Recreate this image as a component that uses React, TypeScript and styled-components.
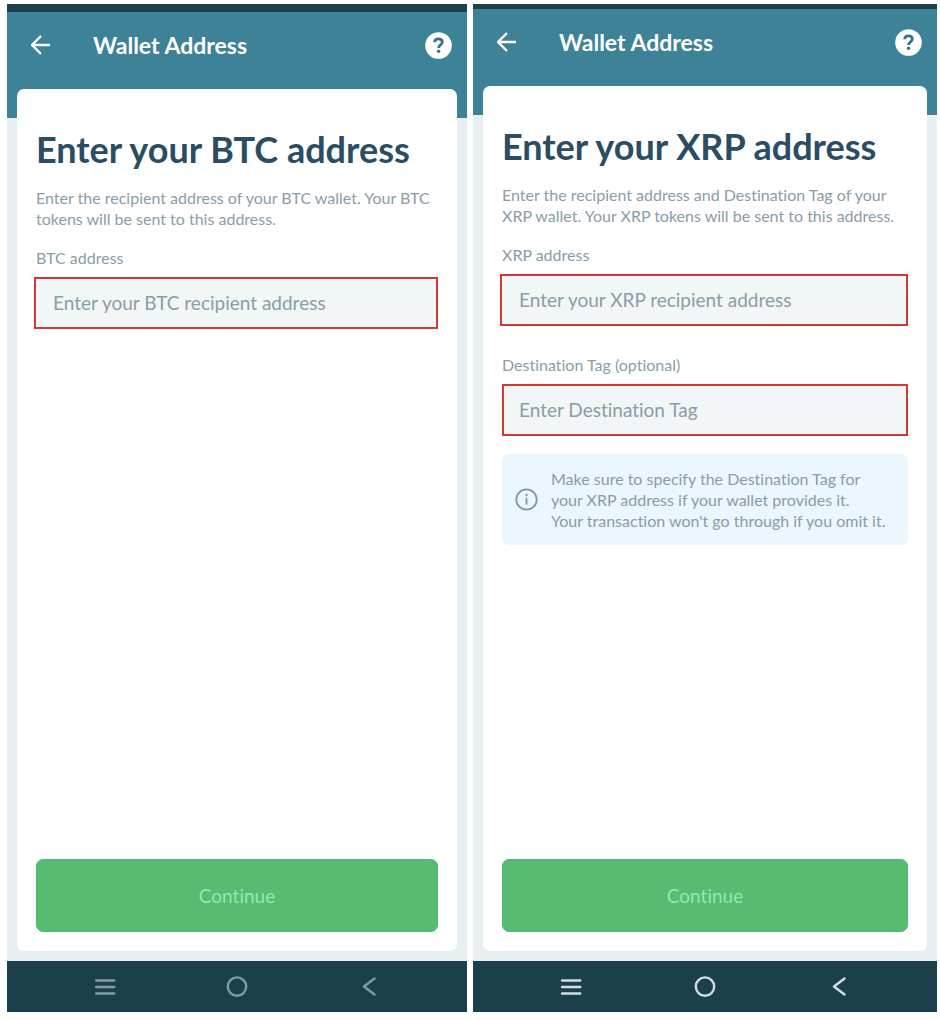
import React, { useId } from "react";
import styled, { createGlobalStyle } from "styled-components";

const GlobalStyle = createGlobalStyle`
  *, *::before, *::after { box-sizing: border-box; }
  body {
    margin: 0;
    background: #fefefe;
    font-family: Lato, "Open Sans", sans-serif;
    font-variant-ligatures: none;
    color: #8a9da8;
  }
`;

const Page = styled.main`
  display: grid;
  grid-template-columns: 460fr 464fr;
  gap: 6px;
  min-height: 100vh;
  padding: 4px 3px 8px 7px;
`;

const Phone = styled.section<{ $status: number }>`
  display: flex;
  flex-direction: column;
  border-top: ${(p) => p.$status}px solid #1d414c;
  background: #e7eff2;
  min-width: 0;
`;

const Header = styled.header`
  display: flex;
  align-items: flex-start;
  height: 106px;
  padding: 20px 15px 0 24px;
  background: #3d8297;
  color: #fff;
`;

const IconButton = styled.button`
  display: flex;
  padding: 0;
  border: 0;
  background: none;
  color: inherit;
  cursor: pointer;
`;

const BackButton = styled(IconButton)`
  padding: 3px 0;
`;

const HeaderTitle = styled.span`
  flex: 1;
  margin-left: 42px;
  font-size: 23px;
  line-height: 27px;
  font-weight: 700;
`;

const Card = styled.form`
  display: flex;
  flex: 1;
  flex-direction: column;
  margin: -29px 10px 10px;
  padding: 38px 19px 19px;
  border-radius: 7px;
  background: #fff;
`;

const Title = styled.h1`
  margin: 0;
  color: #2b4d63;
  font-size: 36px;
  line-height: 44px;
  font-weight: 700;
  white-space: nowrap;
`;

const Intro = styled.p`
  margin: 16px 0 0;
  font-size: 16px;
  line-height: 21px;
  white-space: pre-line;
`;

const Field = styled.div<{ $gap: number }>`
  display: flex;
  flex-direction: column;
  margin-top: ${(p) => p.$gap}px;
`;

const Label = styled.label`
  font-size: 16px;
  line-height: 20px;
`;

const TextInput = styled.input<{ $outset: number }>`
  height: 52px;
  margin: 9px 0 0 ${(p) => -p.$outset}px;
  padding: 0 ${(p) => 15 + p.$outset}px 2px;
  border: 2px solid #cf3a35;
  border-radius: 0;
  background: #f3f6f7;
  color: #2b4d63;
  font: inherit;
  font-size: 19px;
  outline: none;
  &::placeholder {
    color: #8a9da8;
    opacity: 1;
  }
`;

const Note = styled.aside`
  display: flex;
  align-items: center;
  gap: 13px;
  margin-top: 18px;
  padding: 14px 13px;
  border-radius: 7px;
  background: #ebf6fd;
  svg { flex: none; }
`;

const NoteText = styled.p`
  margin: 0;
  font-size: 16px;
  line-height: 21px;
  white-space: pre-line;
`;

const Continue = styled.button`
  height: 73px;
  margin-top: auto;
  border: 1px solid #4db781;
  border-radius: 7px;
  background: #57bc71;
  color: #90e8b7;
  font: inherit;
  font-size: 19px;
  cursor: pointer;
`;

const NavBar = styled.nav<{ $color: string }>`
  display: flex;
  justify-content: space-between;
  align-items: center;
  height: 51px;
  padding: 0 86px;
  background: #1c404b;
  color: ${(p) => p.$color};
`;

const BackArrow = () => (
  <svg width="20" height="20" viewBox="0 0 20 20" fill="none" stroke="currentColor" strokeWidth="2.4" aria-hidden="true">
    <path d="M19 10H1.500M10 1l-9 9 9 9" />
  </svg>
);

const HelpIcon = () => (
  <svg width="27" height="27" viewBox="0 0 27 27" aria-hidden="true">
    <circle cx="13.5" cy="13.5" r="13.3" fill="#fff" />
    <path d="M9.700 10.3c0-2.200 1.600-3.500 3.800-3.500s3.800 1.200 3.800 3.200c0 1.400-.8 2.100-1.800 2.900-1.200.9-1.900 1.500-1.900 3.100" fill="none" stroke="#3d7187" strokeWidth="2.800" />
    <circle cx="13.600" cy="19.300" r="1.700" fill="#3d7187" />
  </svg>
);

const InfoIcon = () => (
  <svg width="23" height="23" viewBox="0 0 23 23" fill="none" stroke="#8398a4" strokeWidth="1.8" aria-hidden="true">
    <circle cx="11.5" cy="11.5" r="10.2" />
    <path d="M11.5 9.800v6.800" />
    <circle cx="11.5" cy="7" r="1.2" fill="#8398a4" stroke="none" />
  </svg>
);

const MenuIcon = () => (
  <svg width="24" height="24" viewBox="0 0 24 24" stroke="currentColor" strokeWidth="2.6" strokeLinecap="round" aria-hidden="true">
    <path d="M3.200 5.500h18M3.200 12h18M3.200 18.500h18" />
  </svg>
);

const HomeIcon = () => (
  <svg width="24" height="24" viewBox="0 0 24 24" fill="none" stroke="currentColor" strokeWidth="2.4" aria-hidden="true">
    <circle cx="12" cy="11.600" r="9.200" />
  </svg>
);

const PreviousIcon = () => (
  <svg width="24" height="24" viewBox="0 0 24 24" fill="none" stroke="currentColor" strokeWidth="2.5" strokeLinecap="round" strokeLinejoin="round" aria-hidden="true">
    <path d="M17.500 3.500L7 11.500l10.500 8" />
  </svg>
);

type FieldProps = { label: string; placeholder: string; gap: number; outset?: number };

const AddressField = ({ label, placeholder, gap, outset = 0 }: FieldProps) => {
  const id = useId();
  return (
    <Field $gap={gap}>
      <Label htmlFor={id}>{label}</Label>
      <TextInput id={id} type="text" placeholder={placeholder} $outset={outset} />
    </Field>
  );
};

type ScreenProps = {
  coin: string;
  status: number;
  intro: string;
  navColor: string;
  children: React.ReactNode;
};

const WalletScreen = ({ coin, status, intro, navColor, children }: ScreenProps) => (
  <Phone $status={status}>
    <Header>
      <BackButton type="button" aria-label="Back"><BackArrow /></BackButton>
      <HeaderTitle>Wallet Address</HeaderTitle>
      <IconButton type="button" aria-label="Help"><HelpIcon /></IconButton>
    </Header>
    <Card onSubmit={(e) => e.preventDefault()}>
      <Title>Enter your {coin} address</Title>
      <Intro>{intro}</Intro>
      {children}
      <Continue type="submit">Continue</Continue>
    </Card>
    <NavBar $color={navColor} aria-label="System">
      <IconButton type="button" aria-label="Recent apps"><MenuIcon /></IconButton>
      <IconButton type="button" aria-label="Home"><HomeIcon /></IconButton>
      <IconButton type="button" aria-label="Previous"><PreviousIcon /></IconButton>
    </NavBar>
  </Phone>
);

export default function App() {
  return (
    <>
      <GlobalStyle />
      <Page>
        <WalletScreen
          coin="BTC"
          status={8}
          navColor="#7f9ca6"
          intro={"Enter the recipient address of your BTC wallet. Your BTC\ntokens will be sent to this address."}
        >
          <AddressField label="BTC address" placeholder="Enter your BTC recipient address" gap={19} outset={2} />
        </WalletScreen>
        <WalletScreen
          coin="XRP"
          status={5}
          navColor="#d3dde4"
          intro={"Enter the recipient address and Destination Tag of your\nXRP wallet. Your XRP tokens will be sent to this address."}
        >
          <AddressField label="XRP address" placeholder="Enter your XRP recipient address" gap={19} outset={2} />
          <AddressField label="Destination Tag (optional)" placeholder="Enter Destination Tag" gap={29} />
          <Note>
            <InfoIcon />
            <NoteText>
              {"Make sure to specify the Destination Tag for\nyour XRP address if your wallet provides it.\nYour transaction won't go through if you omit it."}
            </NoteText>
          </Note>
        </WalletScreen>
      </Page>
    </>
  );
}
